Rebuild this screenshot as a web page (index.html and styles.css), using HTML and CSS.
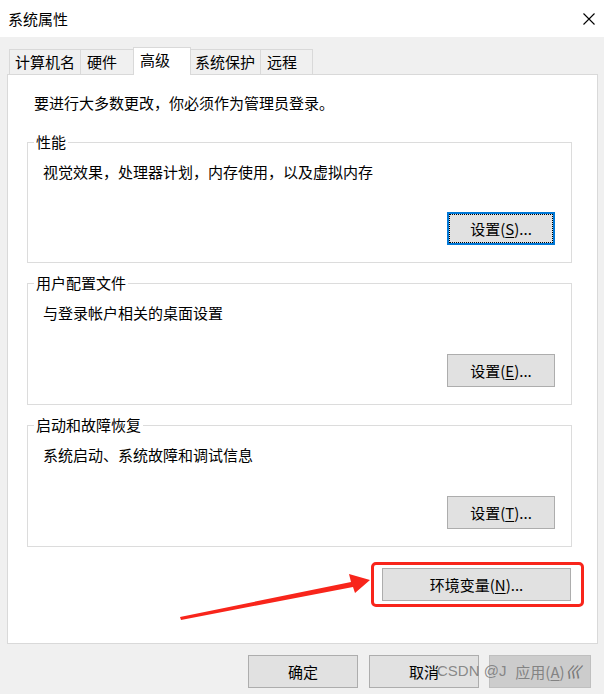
FILE: index.html
```html
<!DOCTYPE html>
<html lang="zh-CN">
<head>
  <meta charset="UTF-8">
  <title>系统属性</title>
  <link rel="stylesheet" href="styles.css">
</head>
<body>

  <div class="titlebar">
    <span class="title">系统属性</span>
    <span class="close">
      <svg width="12" height="12" viewBox="0 0 12 12">
        <path d="M0.5 0.5 L11.5 11.5 M11.5 0.5 L0.5 11.5" stroke="#000" stroke-width="1.1" fill="none"/>
      </svg>
    </span>
  </div>

  <div class="tabs">
    <div class="tab tab-name">计算机名</div>
    <div class="tab tab-hw">硬件</div>
    <div class="tab tab-adv active">高级</div>
    <div class="tab tab-protect">系统保护</div>
    <div class="tab tab-remote">远程</div>
  </div>

  <div class="panel">
    <p class="intro">要进行大多数更改，你必须作为管理员登录。</p>

    <fieldset class="group">
      <legend>性能</legend>
      <p class="desc">视觉效果，处理器计划，内存使用，以及虚拟内存</p>
      <button class="btn focused"><span>设置(<u>S</u>)...</span></button>
    </fieldset>

    <fieldset class="group">
      <legend>用户配置文件</legend>
      <p class="desc">与登录帐户相关的桌面设置</p>
      <button class="btn">设置(<u>E</u>)...</button>
    </fieldset>

    <fieldset class="group">
      <legend>启动和故障恢复</legend>
      <p class="desc">系统启动、系统故障和调试信息</p>
      <button class="btn">设置(<u>T</u>)...</button>
    </fieldset>

    <div class="env-row">
      <button class="btn env-btn">环境变量(<u>N</u>)...</button>
    </div>
  </div>

  <div class="footer">
    <button class="btn footer-btn">确定</button>
    <button class="btn footer-btn">取消</button>
    <button class="btn footer-btn apply" disabled>应用(<u>A</u>)</button>
  </div>

  <!-- annotation overlay -->
  <div class="mark-box"></div>
  <svg class="mark-arrow" width="604" height="694" viewBox="0 0 604 694">
    <polygon points="180,617 351,582 349,574 370,580 355,593 353,587 181,620" fill="#f8251b"/>
  </svg>

  <span class="watermark">CSDN @J</span>
  <span class="watermark wm-tail">巛</span>

</body>
</html>
```

FILE: styles.css
```css
* {
  box-sizing: border-box;
}

body {
  margin: 0;
  width: 604px;
  height: 694px;
  overflow: hidden;
  position: relative;
  background-color: #f0f0f0;
  font-family: "Noto Sans CJK SC", "Liberation Sans", sans-serif;
  font-size: 15px;
  color: #000;
}

u {
  text-decoration: underline;
  text-underline-offset: 2px;
}

.titlebar {
  height: 37px;
  background-color: #fff;
  display: flex;
  align-items: center;
  justify-content: space-between;
  padding: 0 9px 0 8px;
}

.title {
  line-height: 20px;
}

.close {
  display: flex;
  width: 12px;
  height: 12px;
}

/* tabs */
.tabs {
  display: flex;
  align-items: flex-end;
  height: 27px;
  margin-top: 10px;
  padding-left: 9px;
  position: relative;
  z-index: 2;
}

.tab {
  height: 25px;
  border: 1px solid #d9d9d9;
  border-bottom: none;
  background-color: #f0f0f0;
  line-height: 23px;
  padding-left: 6px;
  margin-left: -1px;
  white-space: nowrap;
}

.tab-name { width: 72px; margin-left: 0; padding-left: 5px; }
.tab-hw { width: 54px; }
.tab-adv { width: 58px; }
.tab-protect { width: 71px; padding-left: 4px; }
.tab-remote { width: 53px; }

.tab.active {
  height: 28px;
  margin-bottom: -1px;
  background-color: #fff;
  line-height: 24px;
  position: relative;
}

/* panel */
.panel {
  margin-left: 7px;
  width: 591px;
  height: 570px;
  background-color: #fff;
  border: 1px solid #d9d9d9;
  padding: 18px 26px 0 19px;
}

.intro {
  margin: 0 0 19px 7px;
  line-height: 20px;
}

.group {
  display: flex;
  flex-direction: column;
  width: 545px;
  height: 131px;
  margin: 0 0 10px 0;
  padding: 10px 16px 17px 15px;
  border: 1px solid #dcdcdc;
}

.group + .group {
  height: 132px;
}

.group legend {
  margin-left: -9px;
  padding: 0 2px;
  line-height: 20px;
}

.desc {
  margin: 0;
  line-height: 20px;
}

.btn {
  font-family: inherit;
  font-size: 15px;
  color: #000;
  background-color: #e1e1e1;
  border: 1px solid #adadad;
  height: 33px;
  padding: 0;
  line-height: 20px;
}

.group .btn {
  width: 108px;
  margin-top: auto;
  align-self: flex-end;
}

.btn.focused {
  border: 2px solid #0078d7;
  outline: 1px dotted #000;
  outline-offset: -3px;
}

.env-row {
  display: flex;
  justify-content: flex-end;
  margin-top: 21px;
}

.env-btn {
  width: 189px;
}

/* bottom buttons */
.footer {
  display: flex;
  justify-content: flex-end;
  gap: 11px;
  margin-top: 11px;
  padding-right: 13px;
}

.footer-btn {
  width: 110px;
}

.footer-btn.apply {
  width: 102px;
  margin-left: -1px;
  background-color: #cccccc;
  border-color: #bfbfbf;
  color: #838383;
}

/* red annotation */
.mark-box {
  position: absolute;
  left: 371px;
  top: 562px;
  width: 213px;
  height: 45px;
  border: 3px solid #f8251b;
  border-radius: 5px;
}

.mark-arrow {
  position: absolute;
  left: 0;
  top: 0;
  pointer-events: none;
}

.watermark {
  position: absolute;
  left: 437px;
  top: 662px;
  font-family: "Liberation Sans", sans-serif;
  font-size: 15px;
  line-height: 18px;
  color: rgba(125, 125, 125, 0.9);
}

.wm-tail {
  left: 567px;
  font-family: "Noto Sans CJK SC", sans-serif;
  font-size: 16px;
  color: rgba(110, 110, 110, 0.9);
  transform: skewX(-20deg);
}
```
